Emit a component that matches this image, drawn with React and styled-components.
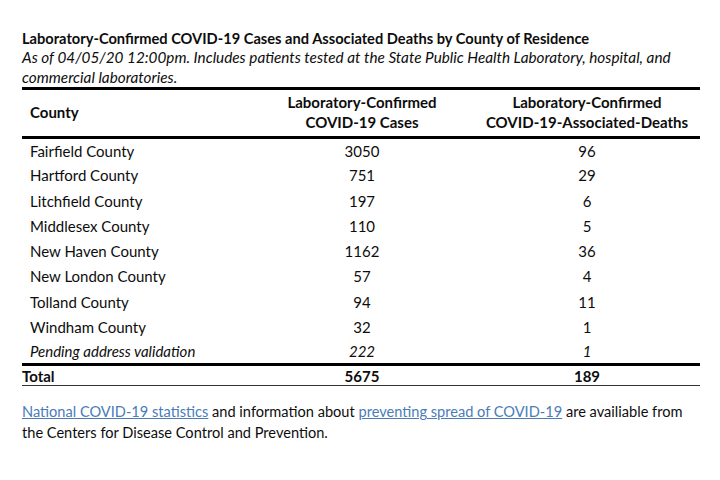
import React from 'react';
import styled, { createGlobalStyle } from 'styled-components';

const GlobalStyle = createGlobalStyle`
  body {
    margin: 0;
    background: #fff;
    font-family: Lato, "Liberation Sans", sans-serif;
    color: #0d0d0d;
  }
`;

const rows = [
  ['Fairfield County', '3050', '96'],
  ['Hartford County', '751', '29'],
  ['Litchfield County', '197', '6'],
  ['Middlesex County', '110', '5'],
  ['New Haven County', '1162', '36'],
  ['New London County', '57', '4'],
  ['Tolland County', '94', '11'],
  ['Windham County', '32', '1'],
];

const Page = styled.div`
  padding: 29px 20px 0 22px;
  width: 678px;
`;

const Title = styled.h1`
  margin: 0;
  font-size: 14.65px;
  font-weight: 700;
  line-height: 19px;
`;

const Note = styled.p`
  margin: 0;
  font-size: 15.3px;
  font-style: italic;
  line-height: 19.5px;
`;

const Table = styled.table`
  width: 100%;
  border-collapse: collapse;
  border-top: 3px solid #000;
  font-size: 15px;
`;

const HeadCell = styled.th`
  font-weight: 700;
  line-height: 20px;
  padding: 2px 0 4px;
  text-align: ${p => (p.$left ? 'left' : 'center')};
  padding-left: ${p => (p.$left ? '8px' : '0')};
  border-bottom: 3px solid #000;
`;

const Row = styled.tr`
  height: 25.25px;
  font-style: ${p => (p.$italic ? 'italic' : 'normal')};
`;

const Cell = styled.td`
  padding: 0;
  line-height: 18px;
  text-align: ${p => (p.$left ? 'left' : 'center')};
  padding-left: ${p => (p.$left ? '8px' : '0')};
`;

const TotalRow = styled.tr`
  height: 21px;
  font-weight: 700;
  border-top: 3px solid #000;
  border-bottom: 1px solid #333;
`;

const TotalCell = styled.td`
  padding: 0;
  line-height: 18px;
  text-align: ${p => (p.$left ? 'left' : 'center')};
`;

const Footer = styled.p`
  margin: 15px 0 0;
  font-size: 14.6px;
  line-height: 21px;
`;

const Link = styled.a`
  color: #4a7cb8;
  text-decoration: underline;
`;

export default function App() {
  return (
    <Page>
      <GlobalStyle />
      <Title>Laboratory-Confirmed COVID-19 Cases and Associated Deaths by County of Residence</Title>
      <Note>
        As of 04/05/20 12:00pm. Includes patients tested at the State Public Health Laboratory, hospital, and
        commercial laboratories.
      </Note>
      <Table>
        <colgroup>
          <col style={{ width: '228px' }} />
          <col style={{ width: '224px' }} />
          <col />
        </colgroup>
        <thead>
          <tr>
            <HeadCell $left>County</HeadCell>
            <HeadCell>Laboratory-Confirmed<br />COVID-19 Cases</HeadCell>
            <HeadCell>Laboratory-Confirmed<br />COVID-19-Associated-Deaths</HeadCell>
          </tr>
        </thead>
        <tbody>
          {rows.map(([county, cases, deaths]) => (
            <Row key={county}>
              <Cell $left>{county}</Cell>
              <Cell>{cases}</Cell>
              <Cell>{deaths}</Cell>
            </Row>
          ))}
          <Row $italic>
            <Cell $left>Pending address validation</Cell>
            <Cell>222</Cell>
            <Cell>1</Cell>
          </Row>
          <TotalRow>
            <TotalCell $left>Total</TotalCell>
            <TotalCell>5675</TotalCell>
            <TotalCell>189</TotalCell>
          </TotalRow>
        </tbody>
      </Table>
      <Footer>
        <Link href="#">National COVID-19 statistics</Link> and information about{' '}
        <Link href="#">preventing spread of COVID-19</Link> are availiable from the Centers for Disease
        Control and Prevention.
      </Footer>
    </Page>
  );
}
